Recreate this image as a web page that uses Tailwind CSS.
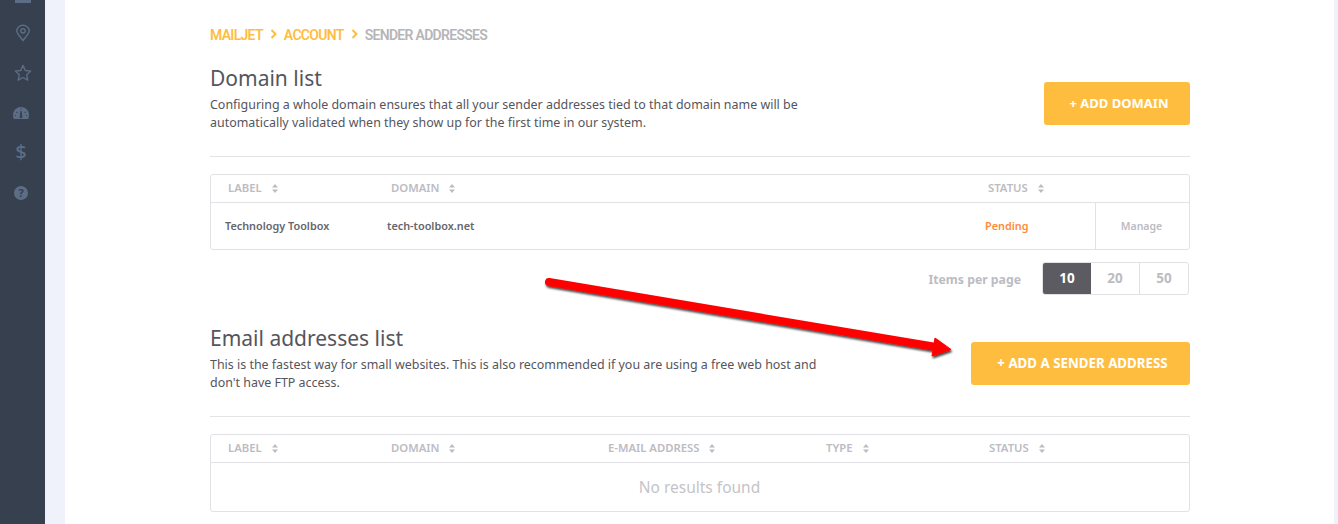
<!DOCTYPE html>
<html lang="en">
<head>
  <meta charset="UTF-8" />
  <title>Sender addresses</title>
  <script src="https://cdn.jsdelivr.net/npm/@tailwindcss/browser@4"></script>
</head>
<body class="h-[524px] overflow-hidden bg-[#eff2fb] font-['Noto_Sans',sans-serif] text-[#55555c]">
  <div class="relative flex h-[524px]">
    <!-- sidebar -->
    <aside class="flex w-[45px] shrink-0 flex-col items-center bg-[#36404e] text-[#5d6d86]">
      <div class="h-[3px] w-4 bg-[#5d6d86]"></div>
      <div class="mt-[20px] flex flex-col items-center gap-[20px]">
        <svg class="h-5 w-5" viewBox="0 0 20 20" fill="none" stroke="currentColor" stroke-width="1.4"><path d="M10 17.5C7.500 14 3.800 11 3.800 7.800a6.200 5.500 0 0 1 12.400 0C16.200 11 12.500 14 10 17.500z"/><circle cx="10" cy="7.800" r="2.200"/></svg>
        <svg class="h-5 w-5" viewBox="0 0 20 20" fill="none" stroke="currentColor" stroke-width="1.400" stroke-linejoin="round"><path d="M10 2.500l2.300 5 5.400.6-4 3.700 1.100 5.400-4.800-2.700-4.800 2.700 1.100-5.400-4-3.700 5.400-.6z"/></svg>
        <svg class="-ml-[3px] h-5 w-5" viewBox="0 0 20 20" fill="currentColor"><path d="M10 4a8 8 0 0 0-8 8c0 1.600.3 3 .9 4h14.200c.6-1 .9-2.400.9-4a8 8 0 0 0-8-8z"/><path d="M10 8l-.8 6.500h1.600zM5.500 9l.8.8M14.500 9l-.8.8M4 12.500h1M15 12.500h1M10 5.500v1" stroke="#36404e" stroke-width="1.100"/></svg>
        <span class="-mt-px mb-px -ml-[3px] flex h-5 w-5 items-center justify-center text-[20px] leading-5 font-medium">$</span>
        <svg class="-ml-[3px] h-5 w-5" viewBox="0 0 20 20"><circle cx="10" cy="10" r="7" fill="currentColor"/><text x="10" y="14" text-anchor="middle" font-size="11" font-weight="700" fill="#36404e">?</text></svg>
      </div>
    </aside>
    <div class="w-5 shrink-0"></div>

    <!-- main -->
    <main class="h-[524px] w-[1269px] shrink-0 bg-white pl-[145px]">
      <div class="w-[980px]">
        <nav class="flex h-[68px] items-center pt-[3px] font-['Roboto',sans-serif] text-[14px] font-semibold tracking-[-0.7px] text-[#ffbd40]">
          <span>MAILJET</span>
          <svg class="mx-[7px] mb-[3px] h-[10px] w-[7px]" viewBox="0 0 7 10" fill="none" stroke="currentColor" stroke-width="2"><path d="M1.500 1l4 4-4 4"/></svg>
          <span>ACCOUNT</span>
          <svg class="mx-[7px] mb-[3px] h-[10px] w-[7px]" viewBox="0 0 7 10" fill="none" stroke="currentColor" stroke-width="2"><path d="M1.500 1l4 4-4 4"/></svg>
          <span class="text-[#b5b5b8]">SENDER ADDRESSES</span>
        </nav>

        <section class="flex h-[89px] items-start justify-between border-b border-[#e4e4e8]">
          <div class="w-[640px]">
            <h2 class="text-[21px] leading-[20px]">Domain list</h2>
            <p class="mt-[8px] text-[12.450px] leading-[18px]">Configuring a whole domain ensures that all your sender addresses tied to that domain name will be automatically validated when they show up for the first time in our system.</p>
          </div>
          <button class="mt-[14px] flex h-[43px] w-[146px] items-center justify-center rounded-[3px] bg-[#ffbd40] pl-[4px] text-[13px] font-bold text-white">+ ADD DOMAIN</button>
        </section>

        <!-- domain table -->
        <div class="mt-[17px] rounded-[3px] border border-[#e2e2e6] text-[11.300px]">
          <div class="flex h-[28px] items-center border-b border-[#e2e2e6] font-semibold text-[#bcbcc2]">
            <span class="ml-[17px] flex w-[163px] items-center gap-[10px]">LABEL <svg class="h-[9px] w-[6px]" viewBox="0 0 6 9" fill="#bcbcc2"><path d="M3 0l3 3.500H0zM3 9L0 5.500h6z"/></svg></span>
            <span class="flex w-[597px] items-center gap-[10px]">DOMAIN <svg class="h-[9px] w-[6px]" viewBox="0 0 6 9" fill="#bcbcc2"><path d="M3 0l3 3.500H0zM3 9L0 5.500h6z"/></svg></span>
            <span class="flex items-center gap-[10px]">STATUS <svg class="h-[9px] w-[6px]" viewBox="0 0 6 9" fill="#bcbcc2"><path d="M3 0l3 3.500H0zM3 9L0 5.500h6z"/></svg></span>
          </div>
          <div class="flex h-[46px] items-center text-[10.850px] font-semibold">
            <span class="ml-[14px] w-[162px] text-[#66666c]">Technology Toolbox</span>
            <span class="w-[598px] text-[#66666c]">tech-toolbox.net</span>
            <span class="w-[110px] text-[#ff8a3c]">Pending</span>
            <span class="flex h-full flex-1 items-center justify-center border-l border-[#e2e2e6] pt-[1px] pr-[2px] text-[10.500px] text-[#bcbcc2]">Manage</span>
          </div>
        </div>

        <!-- pagination -->
        <div class="mt-[12px] flex h-[33px] items-center justify-end pr-[1px]">
          <span class="mr-[21px] pt-[3px] text-[12.250px] font-bold text-[#bcbcc2]">Items per page</span>
          <div class="flex h-[33px] overflow-hidden rounded-[3px] border border-[#e2e2e6] text-[13.500px] font-bold text-[#bcbcc2]">
            <span class="flex w-[48px] items-center justify-center bg-[#5b5b61] text-white">10</span>
            <span class="flex w-[49px] items-center justify-center border-r border-[#e2e2e6]">20</span>
            <span class="flex w-[48px] items-center justify-center">50</span>
          </div>
        </div>

        <section class="mt-[33px] flex h-[89px] items-start justify-between border-b border-[#e4e4e8]">
          <div class="w-[620px]">
            <h2 class="text-[21px] leading-[20px]">Email addresses list</h2>
            <p class="mt-[8px] text-[12.450px] leading-[18px]">This is the fastest way for small websites. This is also recommended if you are using a free web host and don't have FTP access.</p>
          </div>
          <button class="mt-[14px] flex h-[43px] w-[219px] items-center justify-center rounded-[3px] bg-[#ffbd40] pl-[4px] text-[13.300px] font-bold text-white">+ ADD A SENDER ADDRESS</button>
        </section>

        <!-- email table -->
        <div class="mt-[17px] rounded-[3px] border border-[#e2e2e6] text-[11.300px]">
          <div class="flex h-[28px] items-center border-b border-[#e2e2e6] font-semibold text-[#bcbcc2]">
            <span class="ml-[17px] flex w-[163px] items-center gap-[10px]">LABEL <svg class="h-[9px] w-[6px]" viewBox="0 0 6 9" fill="#bcbcc2"><path d="M3 0l3 3.500H0zM3 9L0 5.500h6z"/></svg></span>
            <span class="flex w-[217px] items-center gap-[10px]">DOMAIN <svg class="h-[9px] w-[6px]" viewBox="0 0 6 9" fill="#bcbcc2"><path d="M3 0l3 3.500H0zM3 9L0 5.500h6z"/></svg></span>
            <span class="flex w-[218px] items-center gap-[10px]">E-MAIL ADDRESS <svg class="h-[9px] w-[6px]" viewBox="0 0 6 9" fill="#bcbcc2"><path d="M3 0l3 3.500H0zM3 9L0 5.500h6z"/></svg></span>
            <span class="flex w-[163px] items-center gap-[10px]">TYPE <svg class="h-[9px] w-[6px]" viewBox="0 0 6 9" fill="#bcbcc2"><path d="M3 0l3 3.500H0zM3 9L0 5.500h6z"/></svg></span>
            <span class="flex items-center gap-[10px]">STATUS <svg class="h-[9px] w-[6px]" viewBox="0 0 6 9" fill="#bcbcc2"><path d="M3 0l3 3.500H0zM3 9L0 5.500h6z"/></svg></span>
          </div>
          <div class="flex h-[48px] items-center justify-center pt-[2px] pr-[1px] text-[15.500px] text-[#c4c4c8]">No results found</div>
        </div>
      </div>
    </main>

    <!-- annotation arrow -->
    <svg class="absolute left-0 top-0 h-[524px] w-[1338px]" viewBox="0 0 1338 524" fill="none">
      <defs><filter id="arrow-shadow" x="-5%" y="-20%" width="110%" height="140%"><feDropShadow dx="1" dy="2" stdDeviation="1" flood-color="#000" flood-opacity=".75"/></filter></defs>
      <g filter="url(#arrow-shadow)">
        <path d="M549 282L936 347" stroke="#ff0000" stroke-width="8" stroke-linecap="round"/>
        <path d="M935 338L951 349.500L932 356z" fill="#ff0000" stroke="#ff0000" stroke-linejoin="round"/>
      </g>
    </svg>
  </div>
</body>
</html>
